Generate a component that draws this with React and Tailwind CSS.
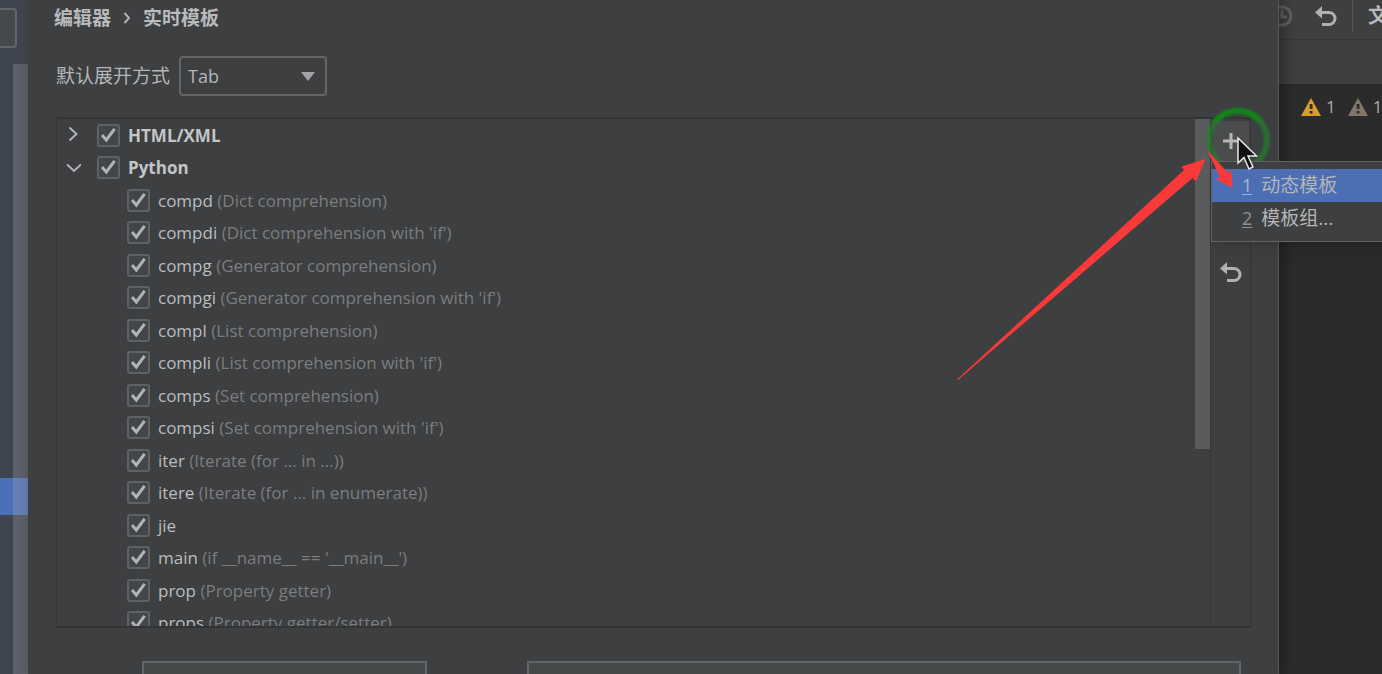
import React from "react";

const TEMPLATES = [
  ["compd", "(Dict comprehension)"],
  ["compdi", "(Dict comprehension with 'if')"],
  ["compg", "(Generator comprehension)"],
  ["compgi", "(Generator comprehension with 'if')"],
  ["compl", "(List comprehension)"],
  ["compli", "(List comprehension with 'if')"],
  ["comps", "(Set comprehension)"],
  ["compsi", "(Set comprehension with 'if')"],
  ["iter", "(Iterate (for ... in ...))"],
  ["itere", "(Iterate (for ... in enumerate))"],
  ["jie", ""],
  ["main", "(if __name__ == '__main__')"],
  ["prop", "(Property getter)"],
  ["props", "(Property getter/setter)"],
];

function Tick({ children }) {
  return (
    <label className="flex items-center gap-2">
      <span className="grid size-[23px] shrink-0">
        <input
          type="checkbox"
          defaultChecked
          className="peer col-start-1 row-start-1 size-[23px] appearance-none rounded-[3px] border-2 border-[#5f6264] bg-[#434548]"
        />
        <svg
          viewBox="0 0 23 23"
          className="pointer-events-none invisible col-start-1 row-start-1 size-[23px] peer-checked:visible"
          fill="none"
          stroke="#b0b2b4"
          strokeWidth="3"
        >
          <path d="M5 11 9.300 16 17.600 4.800" />
        </svg>
      </span>
      {children}
    </label>
  );
}

function Group({ name, open }) {
  return (
    <li className="flex items-center gap-4 pl-2">
      <button type="button" aria-label={name} aria-expanded={open} className="size-4">
        <svg viewBox="0 0 16 16" className="size-4" fill="none" stroke="#b2b4b6" strokeWidth="2">
          {open ? <path d="M2 4.500 9 11 16 4.500" /> : <path d="M4.500 .500 11.500 7 4.500 13.500" />}
        </svg>
      </button>
      <Tick>
        <span className="text-[17px] font-bold text-[#c3c5c7]">{name}</span>
      </Tick>
    </li>
  );
}

function UndoIcon() {
  return (
    <svg viewBox="0 0 22 20" className="h-5 w-[22px]">
      <path d="M0 6.5 7 0v12.5z" fill="#afb1b3" />
      <path d="M6 6.5h8a6 6 0 0 1 0 12H7" fill="none" stroke="#afb1b3" strokeWidth="3" />
    </svg>
  );
}

function Warning({ className }) {
  return (
    <span className="flex items-center gap-[5px]">
      <svg viewBox="0 0 20 18" className={"h-[18px] w-5 " + className}>
        <path d="M10 0 20 18H0z" fill="currentColor" />
        <path d="M8.700 6h2.800v5H8.700zM8.700 13h2.800v2.600H8.700z" fill="#2b2b2b" />
      </svg>
      <span>1</span>
    </span>
  );
}

function Sidebar() {
  return (
    <aside className="flex w-7 shrink-0 flex-col bg-gradient-to-r from-[#3d4450] to-[#41454f]">
      <div className="h-16 pt-2">
        <input
          aria-label="搜索"
          className="h-10 w-[17px] rounded-r-[4px] border-2 border-l-0 border-[#62666a] bg-[#45494a]"
        />
      </div>
      <div className="flex flex-1 flex-col">
        <div className="ml-[13px] h-[414px] bg-[#5d606a]" />
        <div className="flex h-[37px] bg-[#4a71b8]">
          <div className="ml-[13px] flex-1 bg-[#6581b4]" />
        </div>
        <div className="ml-[13px] flex-1 bg-[#5d606a]" />
      </div>
    </aside>
  );
}

function AddMenu() {
  return (
    <div
      role="menu"
      className="absolute top-[42px] left-0 z-20 w-[240px] border border-[#606264] bg-[#3d3f41] py-[7px] text-[19px] text-[#b4b6b8] shadow-lg"
    >
      <button type="button" role="menuitem" className="flex h-[33px] w-full items-center gap-[9px] bg-[#4b6eb4] pl-[30px]">
        <span className="text-[18px] text-[#a3b4d6] underline underline-offset-2">1</span>
        <span>动态模板</span>
      </button>
      <button type="button" role="menuitem" className="flex h-8 w-full items-center gap-[9px] pl-[30px]">
        <span className="text-[18px] text-[#8f9193] underline underline-offset-2">2</span>
        <span>模板组...</span>
      </button>
    </div>
  );
}

function Overlay() {
  return (
    <svg
      viewBox="950 100 330 290"
      className="pointer-events-none absolute -top-5 -left-[261px] z-30 h-[290px] w-[330px]"
    >
      <path d="M1238 139v25l6-5.500 5 11.500 4-2-5-11h8.500z" fill="#111" stroke="#e8e8e8" strokeWidth="1.500" />
      <path d="M957 380.500 1184 171 1181.500 167.500 1205.500 160 1196 182.500 1192.500 179 958 381z" fill="#fb3938" />
      <path d="M1207 151 1228 174 1231.500 171 1232.500 189 1216 180 1220 178z" fill="#fb3938" />
    </svg>
  );
}

function ClickRing() {
  return (
    <svg viewBox="0 0 72 72" className="pointer-events-none absolute -top-[15px] -left-[9px] z-10 size-[72px] blur-[1px]">
      <circle cx="36" cy="36" r="29" fill="none" stroke="#267d2b" strokeOpacity="0.75" strokeWidth="6" />
      <path d="M13 18A29 29 0 0 1 58 17" fill="none" stroke="#15831b" strokeWidth="6" />
    </svg>
  );
}

function Dialog() {
  return (
    <main className="relative z-10 flex min-w-0 flex-1 flex-col border-r border-[#57595b] bg-[#3d3f41] pl-7 shadow-[4px_0_12px_rgba(0,0,0,0.35)]">
      <nav className="-ml-[2px] flex h-[43px] shrink-0 items-center gap-3 pb-2 text-[19px] leading-6 font-bold text-[#b8babc]">
        <a href="#editor">编辑器</a>
        <svg viewBox="0 0 8 12" className="h-3 w-2" fill="none" stroke="#b0b2b4" strokeWidth="2">
          <path d="M1.500 1 6 6l-4.500 5" />
        </svg>
        <a href="#live">实时模板</a>
      </nav>
      <div className="mt-[13px] flex shrink-0 items-center gap-[9px]">
        <label htmlFor="expand" className="text-[19px]">
          默认展开方式
        </label>
        <div className="grid h-10 w-[148px] items-center">
          <select
            id="expand"
            className="col-start-1 row-start-1 h-10 w-full appearance-none rounded-[4px] border-2 border-[#636567] bg-[#3d3f41] pl-[7px]"
          >
            <option>Tab</option>
          </select>
          <svg viewBox="0 0 14 9" className="pointer-events-none col-start-1 row-start-1 mr-3 h-[9px] w-[14px] justify-self-end">
            <path d="M0 0h14L7 9z" fill="#a0a2a4" />
          </svg>
        </div>
      </div>

      <section className="mt-[21px] mr-[27px] flex h-[511px] shrink-0 border border-t-2 border-b-2 border-[#323436]">
        <div className="h-full min-w-0 flex-1 overflow-hidden">
          <ul className="grid h-[520px] auto-rows-fr">
            <Group name="HTML/XML" open={false} />
            <Group name="Python" open />
            {TEMPLATES.map(([name, note]) => (
              <li key={name} className="flex items-center pl-[70px]">
                <Tick>
                  <span className="text-[17px] whitespace-nowrap text-[#bbbdbf]">
                    {name} <span className="text-[#7b7d7f]">{note}</span>
                  </span>
                </Tick>
              </li>
            ))}
          </ul>
        </div>
        <div className="h-[330px] w-[15px] bg-[#595b5d]" />
        <div className="relative flex w-10 flex-col items-center gap-[101px] border-l border-[#343638] pt-[2px]">
          <button type="button" aria-label="添加" className="flex h-10 w-9 items-center justify-center rounded bg-[#4a4c4e]">
            <svg viewBox="0 0 16 16" className="size-4" stroke="#b4b6b8" strokeWidth="3">
              <path d="M8 0v16M0 8h16" />
            </svg>
          </button>
          <button type="button" aria-label="还原" className="flex">
            <UndoIcon />
          </button>
          <ClickRing />
          <AddMenu />
          <Overlay />
        </div>
      </section>

      <div className="mt-[33px] mr-[37px] ml-[86px] flex gap-[100px]">
        <input aria-label="缩写" className="h-10 w-[285px] border-2 border-[#626567] bg-[#45494a]" />
        <input aria-label="描述" className="h-10 min-w-0 flex-1 border-2 border-[#626567] bg-[#45494a]" />
      </div>
    </main>
  );
}

function EditorPane() {
  return (
    <aside className="flex w-[103px] shrink-0 flex-col overflow-hidden bg-[#2b2b2b]">
      <div className="flex h-10 shrink-0 items-center gap-[22px] border-b border-[#343638] bg-[#3d3f41] pb-2">
        <svg viewBox="0 0 22 22" className="-ml-2 size-[22px] shrink-0" fill="none" stroke="#5e6062" strokeWidth="3">
          <circle cx="11" cy="11" r="9" />
          <path d="M11 5v7h5" />
        </svg>
        <div className="flex shrink-0 items-center gap-[15px]">
          <button type="button" aria-label="撤销" className="flex">
            <UndoIcon />
          </button>
          <div className="h-[30px] w-px bg-[#55575a]" />
          <span className="text-[20px] font-bold whitespace-nowrap text-[#b8babc]">文</span>
        </div>
      </div>
      <div className="h-11 shrink-0 bg-[#3d3f41]" />
      <div className="flex shrink-0 gap-3 pt-[10px] pl-[22px] text-[17px] text-[#a9abad]">
        <Warning className="text-[#d89e2d]" />
        <Warning className="text-[#82786a]" />
      </div>
    </aside>
  );
}

export default function App() {
  return (
    <div className="flex h-screen overflow-hidden bg-[#3d3f41] font-['Open_Sans','Noto_Sans_CJK_SC',sans-serif] text-[18px] text-[#b4b6b8]">
      <Sidebar />
      <Dialog />
      <EditorPane />
    </div>
  );
}
